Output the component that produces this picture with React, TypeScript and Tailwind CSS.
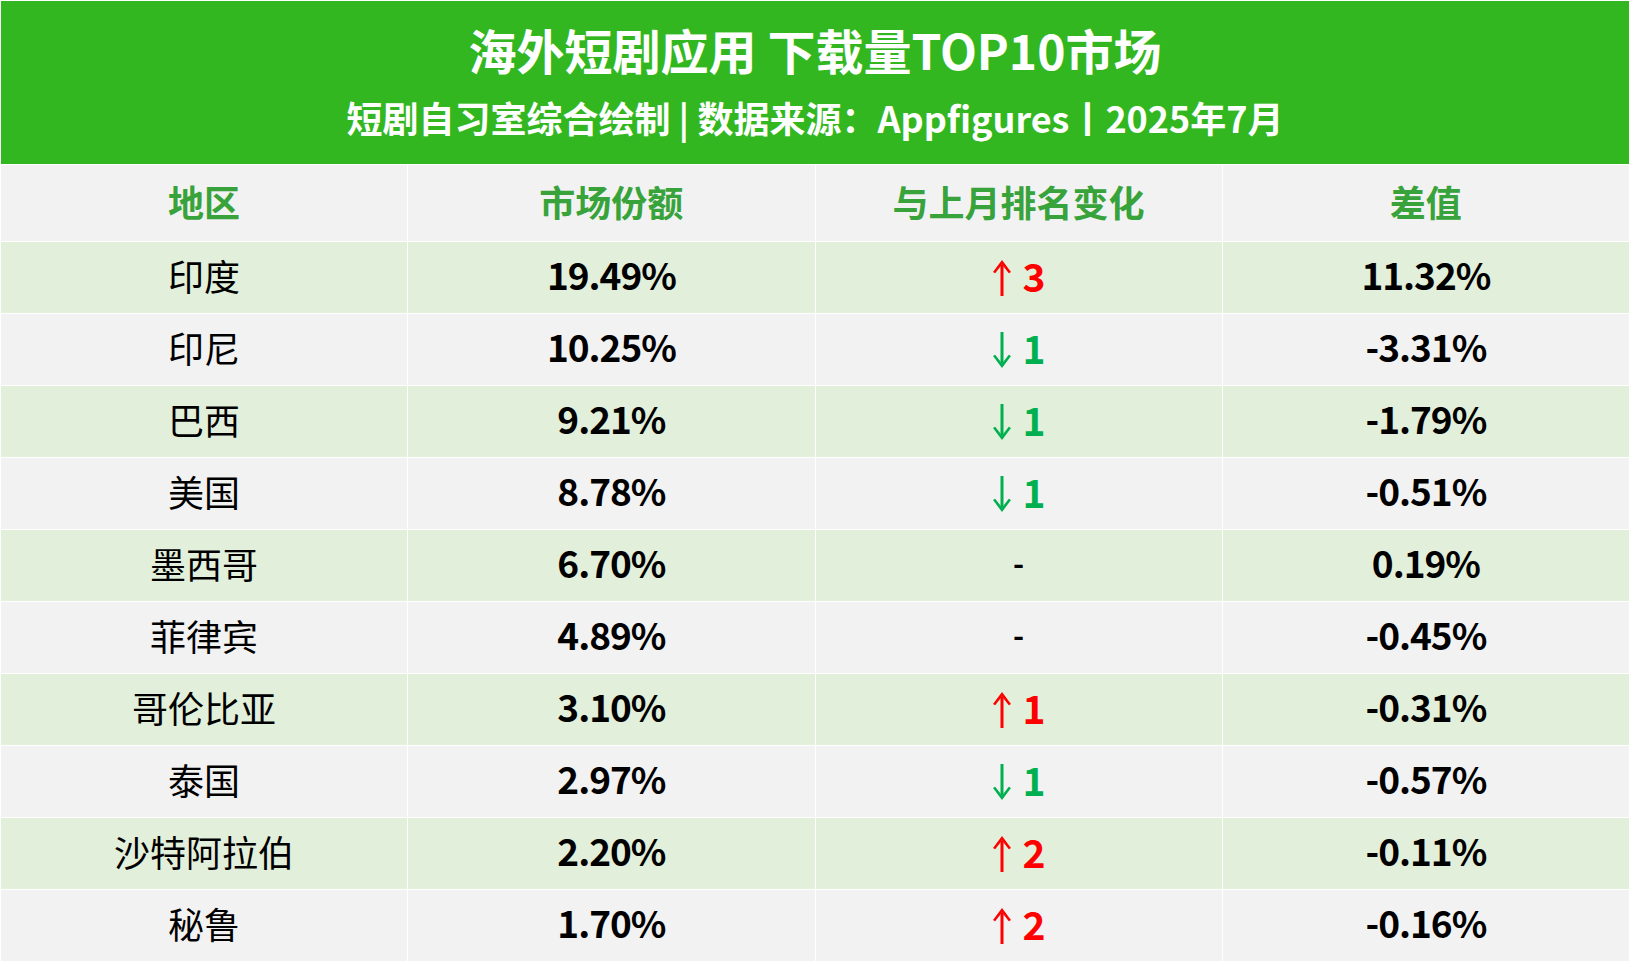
import React from "react";

type Row = {
  region: string;
  share: string;
  dir: "up" | "down" | "none";
  change: string;
  diff: string;
};

const rows: Row[] = [
  { region: "印度", share: "19.49%", dir: "up", change: "3", diff: "11.32%" },
  { region: "印尼", share: "10.25%", dir: "down", change: "1", diff: "-3.31%" },
  { region: "巴西", share: "9.21%", dir: "down", change: "1", diff: "-1.79%" },
  { region: "美国", share: "8.78%", dir: "down", change: "1", diff: "-0.51%" },
  { region: "墨西哥", share: "6.70%", dir: "none", change: "-", diff: "0.19%" },
  { region: "菲律宾", share: "4.89%", dir: "none", change: "-", diff: "-0.45%" },
  { region: "哥伦比亚", share: "3.10%", dir: "up", change: "1", diff: "-0.31%" },
  { region: "泰国", share: "2.97%", dir: "down", change: "1", diff: "-0.57%" },
  { region: "沙特阿拉伯", share: "2.20%", dir: "up", change: "2", diff: "-0.11%" },
  { region: "秘鲁", share: "1.70%", dir: "up", change: "2", diff: "-0.16%" },
];

const headers = ["地区", "市场份额", "与上月排名变化", "差值"];

function Arrow({ up }: { up: boolean }) {
  return (
    <svg width="20" height="36" viewBox="0 0 20 36" className={up ? "" : "rotate-180"}>
      <rect x="8.5" y="5" width="3" height="31" fill="currentColor" />
      <path d="M10 0 L19 12 L16.8 13.2 L10 4.4 L3.2 13.2 L1 12 Z" fill="currentColor" />
    </svg>
  );
}

function Change({ row }: { row: Row }) {
  if (row.dir === "none") {
    return <span className="text-[30px] font-semibold text-black pb-[6px]">-</span>;
  }
  const color = row.dir === "up" ? "text-[#ff0000]" : "text-[#00b050]";
  return (
    <span className={`flex items-center ${color}`}>
      <Arrow up={row.dir === "up"} />
      <span className="ml-[11px] text-[39px] font-semibold leading-none pb-[4px]">
        {row.change}
      </span>
    </span>
  );
}

export default function App() {
  return (
    <div className='w-[1630px] h-[962px] bg-white p-px font-["Noto_Sans_CJK_SC",sans-serif]'>
      <div className="h-[163px] bg-[#32b720] flex flex-col items-center pt-[18px] text-white font-bold">
        <h1 className="text-[48px] leading-[60px]">海外短剧应用 下载量TOP10市场</h1>
        <p className="mt-[14px] text-[36px] leading-[48px]">
          短剧自习室综合绘制 | 数据来源：Appfigures丨2025年7月
        </p>
      </div>

      <div className="mt-px grid grid-cols-4 gap-px">
        {headers.map((h) => (
          <div
            key={h}
            className="h-[76px] bg-[#f2f2f2] flex items-center justify-center pb-[5px] text-[36px] font-bold text-[#37a33a]"
          >
            {h}
          </div>
        ))}

        {rows.map((r, i) => {
          const bg = i % 2 === 0 ? "bg-[#e2efda]" : "bg-[#f2f2f2]";
          return (
            <React.Fragment key={r.region}>
              <div className={`h-[71px] ${bg} flex items-center justify-center pb-[5px] text-[36px] text-black`}>
                {r.region}
              </div>
              <div className={`h-[71px] ${bg} flex items-center justify-center pb-[5px] text-[37px] font-semibold tracking-[-1px] text-black`}>
                {r.share}
              </div>
              <div className={`h-[71px] ${bg} flex items-center justify-center`}>
                <Change row={r} />
              </div>
              <div className={`h-[71px] ${bg} flex items-center justify-center pb-[5px] text-[37px] font-semibold tracking-[-1px] text-black`}>
                {r.diff}
              </div>
            </React.Fragment>
          );
        })}
      </div>
    </div>
  );
}
